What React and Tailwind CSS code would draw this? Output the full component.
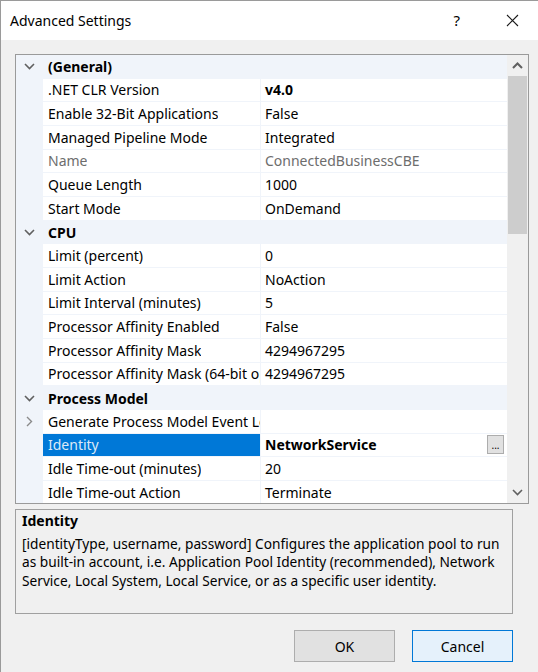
import React from 'react';

const FONT = { fontFamily: '"Noto Sans", "Open Sans", sans-serif' };

const sections = [
  {
    title: '(General)',
    rows: [
      { name: '.NET CLR Version', value: 'v4.0', bold: true },
      { name: 'Enable 32-Bit Applications', value: 'False' },
      { name: 'Managed Pipeline Mode', value: 'Integrated' },
      { name: 'Name', value: 'ConnectedBusinessCBE', disabled: true },
      { name: 'Queue Length', value: '1000' },
      { name: 'Start Mode', value: 'OnDemand' },
    ],
  },
  {
    title: 'CPU',
    rows: [
      { name: 'Limit (percent)', value: '0' },
      { name: 'Limit Action', value: 'NoAction' },
      { name: 'Limit Interval (minutes)', value: '5' },
      { name: 'Processor Affinity Enabled', value: 'False' },
      { name: 'Processor Affinity Mask', value: '4294967295' },
      { name: 'Processor Affinity Mask (64-bit option)', value: '4294967295' },
    ],
  },
  {
    title: 'Process Model',
    rows: [
      { name: 'Generate Process Model Event Log Entry', value: '', expandable: true },
      { name: 'Identity', value: 'NetworkService', bold: true, selected: true },
      { name: 'Idle Time-out (minutes)', value: '20' },
      { name: 'Idle Time-out Action', value: 'Terminate' },
    ],
  },
];

function ChevronDown({ className = '' }) {
  return (
    <svg width="11" height="7" viewBox="0 0 11 7" className={className}>
      <polyline points="1,1 5.5,5.5 10,1" fill="none" stroke="currentColor" strokeWidth="1.6" />
    </svg>
  );
}

function ChevronRight() {
  return (
    <svg width="7" height="11" viewBox="0 0 7 11" className="text-[#8a8a8a]">
      <polyline points="1,1 5.5,5.5 1,10" fill="none" stroke="currentColor" strokeWidth="1.4" />
    </svg>
  );
}

function ChevronUp() {
  return (
    <svg width="11" height="7" viewBox="0 0 11 7" className="text-[#606060]">
      <polyline points="1,6 5.5,1.5 10,6" fill="none" stroke="currentColor" strokeWidth="2" />
    </svg>
  );
}

function CategoryRow({ title }) {
  return (
    <div className="flex h-[23.67px] shrink-0 items-center bg-[#f0f4fa]">
      <div className="flex w-[27px] shrink-0 justify-center text-[#606060]">
        <ChevronDown />
      </div>
      <div className="pl-[5px] text-[14px] font-bold text-black">{title}</div>
    </div>
  );
}

function PropertyRow({ row }) {
  const nameClass = row.selected
    ? 'bg-[#0078d7] text-[#dce9f7]'
    : row.disabled
      ? 'bg-white text-[#6d6d6d]'
      : 'bg-white text-black';

  return (
    <div className="flex h-[23.67px] shrink-0 bg-[#f0f4fa]">
      <div className="flex w-[27px] shrink-0 items-center justify-center">
        {row.expandable ? <ChevronRight /> : null}
      </div>
      <div
        className={`flex w-[217px] shrink-0 items-center overflow-hidden whitespace-nowrap border-b border-[#f0f4fa] pl-[5px] text-[14px] ${nameClass}`}
      >
        <span className="block overflow-hidden">{row.name}</span>
      </div>
      <div className="w-px shrink-0 bg-[#f0f4fa]" />
      <div
        className={`flex min-w-0 flex-1 items-center justify-between overflow-hidden whitespace-nowrap border-b border-[#f0f4fa] bg-white pl-[4px] pr-[3px] text-[14px] ${
          row.disabled ? 'text-[#6d6d6d]' : 'text-black'
        } ${row.bold ? 'font-bold' : ''}`}
      >
        <span>{row.value}</span>
        {row.selected ? (
          <span className="flex h-[19px] w-[17px] items-end justify-center border border-[#adadad] bg-[#e1e1e1] pb-[3px] text-[10px] leading-none font-normal text-black">
            ...
          </span>
        ) : null}
      </div>
    </div>
  );
}

function Scrollbar() {
  return (
    <div className="flex w-[21px] shrink-0 flex-col bg-[#f0f0f0]">
      <div className="flex h-[21px] shrink-0 items-center justify-center">
        <ChevronUp />
      </div>
      <div className="mx-[1px] h-[158px] bg-[#cdcdcd]" />
      <div className="flex-1" />
      <div className="flex h-[21px] shrink-0 items-center justify-center text-[#606060]">
        <ChevronDown />
      </div>
    </div>
  );
}

export default function App() {
  return (
    <div
      className="flex h-[672px] w-[538px] flex-col overflow-hidden border-l border-t border-[#9a9a9a] bg-[#f0f0f0]"
      style={FONT}
    >
      <div className="flex h-[39px] shrink-0 items-center bg-white">
        <div className="pl-[9px] text-[14px] text-black">Advanced Settings</div>
        <div className="ml-auto pr-[46px] text-[15px] text-black">?</div>
        <svg width="13" height="13" viewBox="0 0 13 13" className="mr-[19px]">
          <path d="M1 1 L12 12 M12 1 L1 12" stroke="#1a1a1a" strokeWidth="1.1" fill="none" />
        </svg>
      </div>

      <div className="flex flex-1 flex-col px-[14px] pt-[14px]">
        <div className="flex h-[450px] w-[514px] shrink-0 border border-[#9a9a9a]">
          <div className="flex min-w-0 flex-1 flex-col overflow-hidden">
            {sections.map((section) => (
              <React.Fragment key={section.title}>
                <CategoryRow title={section.title} />
                {section.rows.map((row) => (
                  <PropertyRow key={row.name} row={row} />
                ))}
              </React.Fragment>
            ))}
          </div>
          <Scrollbar />
        </div>

        <div className="mt-[5px] h-[105px] w-[498px] shrink-0 overflow-hidden border border-[#a0a0a0] px-[6px] pt-[2px] text-[14px] leading-[18.6px] text-black">
          <div className="font-bold">Identity</div>
          <div className="mt-[4px] whitespace-nowrap text-[13.7px]">
            [identityType, username, password] Configures the application pool to run
            <br />
            as built-in account, i.e. Application Pool Identity (recommended), Network
            <br />
            Service, Local System, Local Service, or as a specific user identity.
          </div>
        </div>

        <div className="mt-[16px] flex justify-end gap-[17px] pr-[11px]">
          <button className="h-[32px] w-[101px] border border-[#adadad] bg-[#e1e1e1] text-[14px] text-black">
            OK
          </button>
          <button className="h-[32px] w-[101px] border border-[#0078d7] bg-[#e5f1fb] text-[14px] text-black">
            Cancel
          </button>
        </div>
      </div>
    </div>
  );
}
